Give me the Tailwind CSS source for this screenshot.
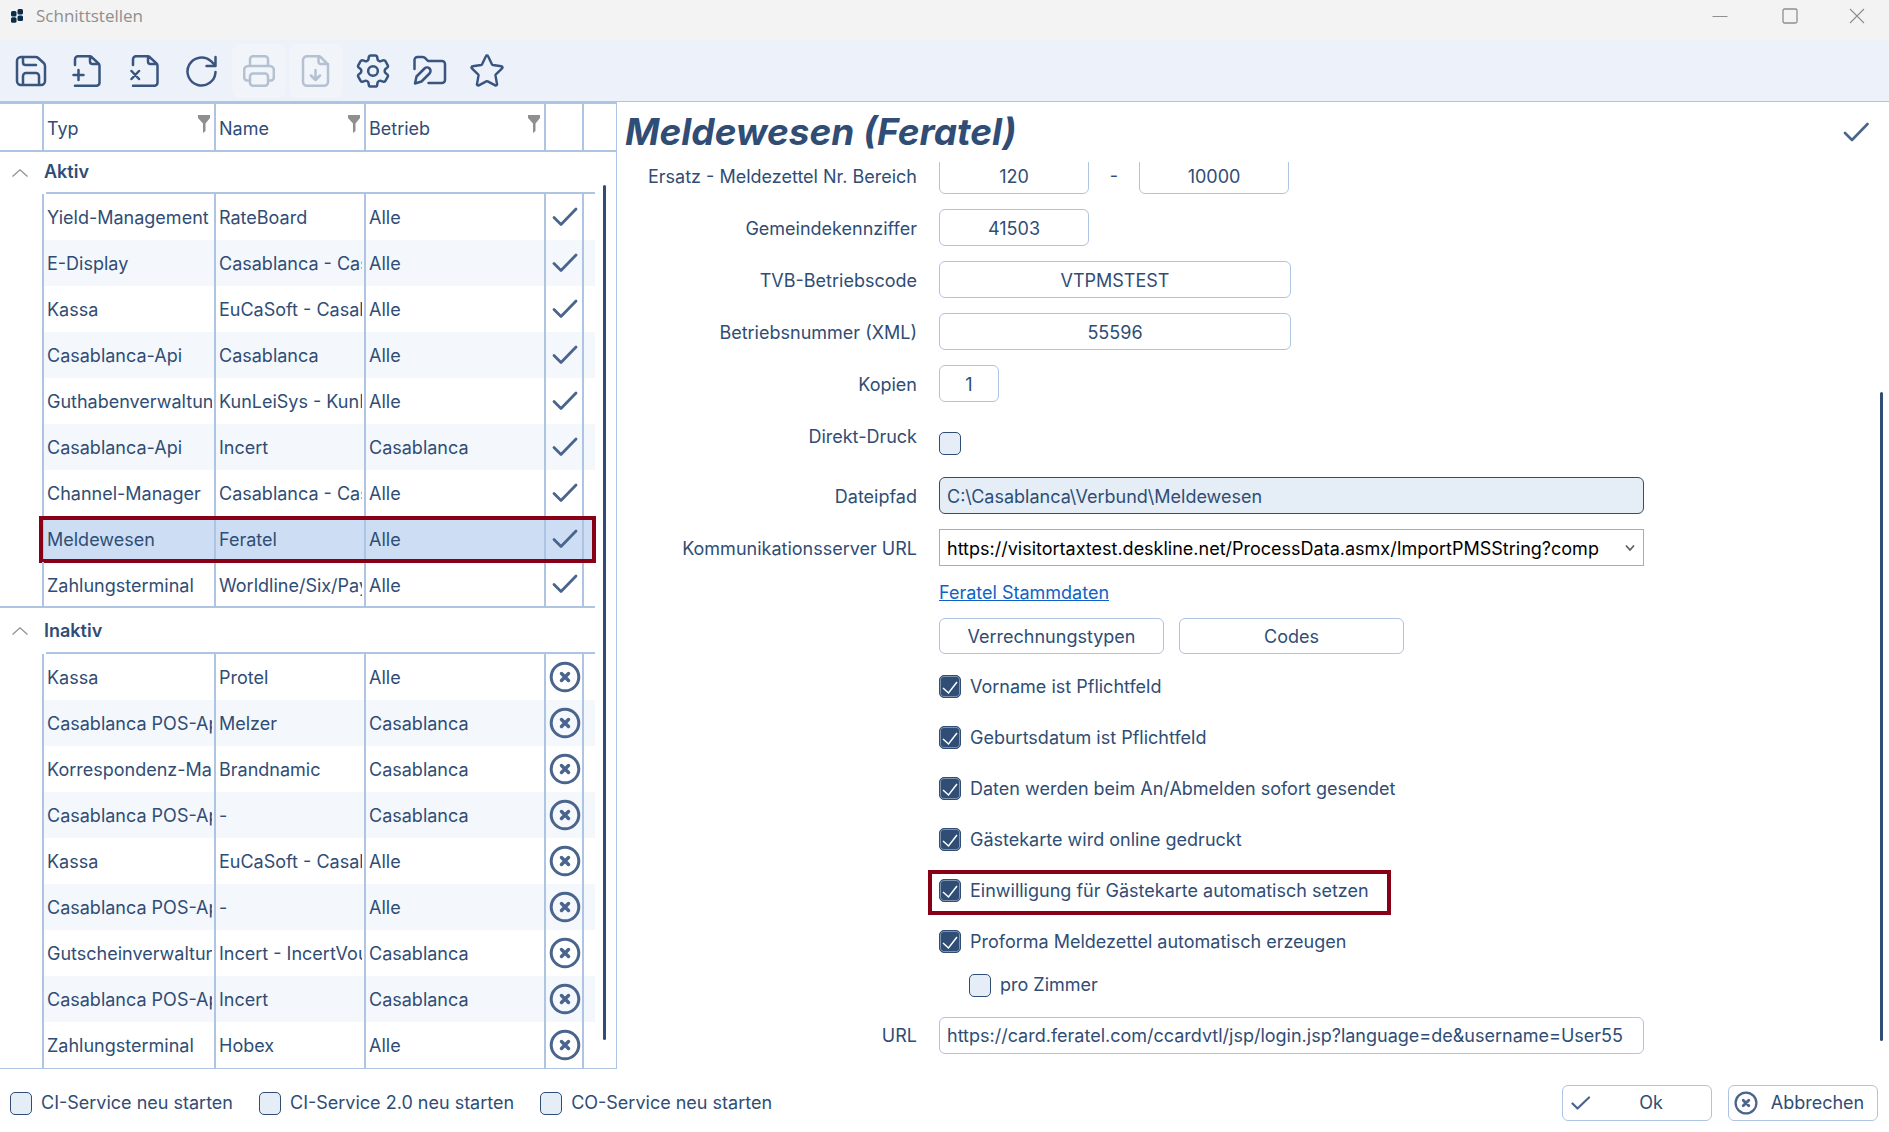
<!DOCTYPE html>
<html lang="de">
<head>
<meta charset="utf-8">
<title>Schnittstellen</title>
<meta name="viewport" content="width=device-width, initial-scale=1">
<script src="https://cdn.jsdelivr.net/npm/@tailwindcss/browser@4"></script>
</head>
<body class="flex min-h-screen flex-col bg-white font-['Inter',sans-serif] text-lg leading-6 text-[#2f4d75]">

<!-- Window title bar -->
<header class="flex h-10 shrink-0 items-start bg-[#f3f3f3] text-[#8f8f8f]">
  <svg class="mt-2 ml-2.5 size-4" viewBox="0 0 16 16" fill="#0b2b4b"><rect x="1" y="3" width="5.500" height="5.500" rx="1.500"/><rect x="7.500" y="1" width="5.500" height="5.500" rx="1.500"/><rect x="1" y="9.300" width="5.500" height="5.500" rx="1.500"/><rect x="7.500" y="7.500" width="5.500" height="5.500" rx="1.500"/></svg>
  <h1 class="mt-1 ml-2.5 flex-1 font-['Open_Sans',sans-serif] text-[17px]">Schnittstellen</h1>
  <button type="button" aria-label="Minimieren" class="flex h-8 w-[70px] items-center justify-center"><svg class="size-4" viewBox="0 0 16 16" stroke="currentColor" fill="none"><path d="M.5 8.500h15"/></svg></button>
  <button type="button" aria-label="Maximieren" class="flex h-8 w-[70px] items-center justify-center"><svg class="size-4" viewBox="0 0 16 16" stroke="currentColor" fill="none" stroke-width="1.300"><rect x="1" y="1" width="14" height="14" rx="1.500"/></svg></button>
  <button type="button" aria-label="Schließen" class="flex h-8 w-16 items-center justify-center"><svg class="size-4" viewBox="0 0 16 16" stroke="currentColor" fill="none" stroke-width="1.200"><path d="M1 1l14 14M15 1L1 15"/></svg></button>
</header>

<!-- Toolbar -->
<nav aria-label="Werkzeuge" class="flex h-[62px] shrink-0 items-start gap-[3px] border-b border-[#adc4e3] bg-[#edf1f9] pt-1 pl-1 text-[#38557f]">
  <button type="button" aria-label="Speichern" class="flex size-[54px] items-center justify-center"><svg class="size-8" viewBox="0 0 32 32" fill="none" stroke="currentColor" stroke-width="2.500" stroke-linecap="round" stroke-linejoin="round"><path d="M2 6a4 4 0 0 1 4-4h14.500a4 4 0 0 1 2.700 1l5.500 5a4 4 0 0 1 1.300 3v15a4 4 0 0 1-4 4H6a4 4 0 0 1-4-4zM8 2v5.500a2.500 2.500 0 0 0 2.500 2.500H21M8 30V21a3 3 0 0 1 3-3h10a3 3 0 0 1 3 3v9"/></svg></button>
  <button type="button" aria-label="Neu" class="flex size-[54px] items-center justify-center"><svg class="size-8" viewBox="0 0 32 32" fill="none" stroke="currentColor" stroke-width="2.500" stroke-linecap="round" stroke-linejoin="round"><path d="M3 10V4.200a3 3 0 0 1 3-3h11.500a3 3 0 0 1 2 .8l7 6.400a3 3 0 0 1 1 2.300V27.800a3 3 0 0 1-3 3H3M18 1.200v5.300A2.500 2.500 0 0 0 20.500 9H27M1.500 20h10M6.500 15v10"/></svg></button>
  <button type="button" aria-label="Löschen" class="flex size-[54px] items-center justify-center"><svg class="size-8" viewBox="0 0 32 32" fill="none" stroke="currentColor" stroke-width="2.500" stroke-linecap="round" stroke-linejoin="round"><path d="M4 10V4.200a3 3 0 0 1 3-3h11.500a3 3 0 0 1 2 .8l7 6.400a3 3 0 0 1 1 2.300V27.800a3 3 0 0 1-3 3H4M19 1.200v5.300A2.500 2.500 0 0 0 21.500 9H28M2.500 16l7.500 8M10 16l-7.500 8"/></svg></button>
  <button type="button" aria-label="Aktualisieren" class="flex size-[54px] items-center justify-center"><svg class="size-8" viewBox="0 0 32 32" fill="none" stroke="currentColor" stroke-width="2.500" stroke-linecap="round" stroke-linejoin="round"><path d="M29.500 17A14 14 0 1 1 25 6.200l4 4M29.500 2v9h-9"/></svg></button>
  <button type="button" disabled aria-label="Drucken" class="flex size-[54px] items-center justify-center rounded-lg bg-[#f1f4f9] text-[#b4c1d2]"><svg class="size-8" viewBox="0 0 32 32" fill="none" stroke="currentColor" stroke-width="2.500" stroke-linejoin="round"><path d="M7 11V4.200a3 3 0 0 1 3-3h12a3 3 0 0 1 3 3V11M7 25.500H4.200a3 3 0 0 1-3-3V15a4 4 0 0 1 4-4h21.600a4 4 0 0 1 4 4v7.500a3 3 0 0 1-3 3H25M10 18.500h12a3 3 0 0 1 3 3v6.300a3 3 0 0 1-3 3H10a3 3 0 0 1-3-3v-6.300a3 3 0 0 1 3-3z"/></svg></button>
  <button type="button" disabled aria-label="Exportieren" class="flex size-[54px] items-center justify-center rounded-lg bg-[#f1f4f9] text-[#b4c1d2]"><svg class="size-8" viewBox="0 0 32 32" fill="none" stroke="currentColor" stroke-width="2.500" stroke-linecap="round" stroke-linejoin="round"><path d="M3 5.200a4 4 0 0 1 4-4h11.500a3 3 0 0 1 2 .8l6.500 6.400a3 3 0 0 1 1 2.300v16.100a4 4 0 0 1-4 4H7a4 4 0 0 1-4-4zM18.500 1.200v5.300A2.500 2.500 0 0 0 21 9h7M15.500 15v10M11 20.500l4.500 4.500 4.500-4.500"/></svg></button>
  <button type="button" aria-label="Einstellungen" class="flex size-[54px] items-center justify-center"><svg class="size-[34px]" viewBox="2.200 2.200 19.600 19.600" fill="none" stroke="currentColor" stroke-width="1.450" stroke-linejoin="round"><path d="M9.594 3.940c.09-.542.56-.94 1.110-.94h2.593c.55 0 1.020.398 1.110.94l.213 1.281c.063.374.313.686.645.87.074.04.147.083.22.127.325.196.72.257 1.075.124l1.217-.456a1.125 1.125 0 0 1 1.370.49l1.296 2.247a1.125 1.125 0 0 1-.26 1.431l-1.003.827c-.293.241-.438.613-.43.992a7.723 7.723 0 0 1 0 .255c-.008.378.137.75.43.991l1.004.827c.424.35.534.955.26 1.430l-1.298 2.247a1.125 1.125 0 0 1-1.369.491l-1.217-.456c-.355-.133-.75-.072-1.076.124a6.470 6.470 0 0 1-.22.128c-.331.183-.581.495-.644.869l-.213 1.281c-.09.543-.56.94-1.110.94h-2.594c-.55 0-1.019-.398-1.110-.94l-.213-1.281c-.062-.374-.312-.686-.644-.87a6.520 6.520 0 0 1-.22-.127c-.325-.196-.72-.257-1.076-.124l-1.217.456a1.125 1.125 0 0 1-1.369-.49l-1.297-2.247a1.125 1.125 0 0 1 .26-1.431l1.004-.827c.292-.24.437-.613.43-.991a6.932 6.932 0 0 1 0-.255c.007-.38-.138-.751-.43-.992l-1.004-.827a1.125 1.125 0 0 1-.26-1.430l1.297-2.247a1.125 1.125 0 0 1 1.370-.491l1.216.456c.356.133.751.072 1.076-.124.072-.044.146-.086.22-.128.332-.183.582-.495.644-.869z"/><circle cx="12" cy="12" r="2.800"/></svg></button>
  <button type="button" aria-label="Ordner bearbeiten" class="flex size-[54px] items-center justify-center"><svg class="h-8 w-[34px]" viewBox="0 0 34 32" fill="none" stroke="currentColor" stroke-width="2.500" stroke-linecap="round" stroke-linejoin="round"><path d="M1.500 14V5a3 3 0 0 1 3-3h5a4 4 0 0 1 3 1.300L15 6h14a3 3 0 0 1 3 3v16a3 3 0 0 1-3 3H15.500M2 28.500l1.500-7L11.500 13.500a3.200 3.200 0 0 1 5 5L8.500 26.500z"/></svg></button>
  <button type="button" aria-label="Favorit" class="flex size-[54px] items-center justify-center"><svg class="size-[34px]" viewBox="0 0 34 34" fill="none" stroke="currentColor" stroke-width="2.400" stroke-linejoin="round"><path d="M15.900 2.200a1.200 1.200 0 0 1 2.200 0l3.800 8a1.500 1.500 0 0 0 1 .8l8.500 1.200a1.200 1.200 0 0 1 .7 2.100l-6.200 6a1.500 1.500 0 0 0-.4 1.200l1.500 8.600a1.200 1.200 0 0 1-1.800 1.300l-7.500-4a1.500 1.500 0 0 0-1.400 0l-7.500 4a1.200 1.200 0 0 1-1.800-1.300l1.500-8.600a1.500 1.500 0 0 0-.4-1.200l-6.200-6a1.200 1.200 0 0 1 .7-2.100l8.500-1.200a1.500 1.500 0 0 0 1-.8z"/></svg></button>
</nav>

<main class="flex flex-1">
  <!-- Interface list -->
  <section aria-label="Liste der Schnittstellen" class="relative w-[617px] shrink-0 self-start border-r border-b border-[#adc4e3]">
    <table class="w-full table-fixed border-separate border-spacing-0 text-left">
      <colgroup><col class="w-[42px]"><col class="w-[172px]"><col class="w-[150px]"><col class="w-[180px]"><col class="w-[38px]"><col class="w-[13px]"><col></colgroup>
      <thead>
        <tr class="h-[50px]" id="head"></tr>
      </thead>
      <tbody id="rows"></tbody>
    </table>
    <div class="pointer-events-none absolute top-[83px] right-2.5 bottom-[28px] w-[3px] rounded-full bg-[#2f4d75]"></div>
  </section>

  <!-- Detail form -->
  <section class="relative min-w-0 flex-1 pt-[60px]">
    <div class="absolute inset-x-0 top-0 flex h-[60px] items-center justify-between pr-5 pl-2">
      <h2 class="text-[37px] font-bold italic">Meldewesen (Feratel)</h2>
      <svg class="h-5 w-[26px]" viewBox="0 0 26 20" fill="none" stroke="#4a658d" stroke-width="2.600" stroke-linecap="round" stroke-linejoin="round"><path d="M2 11l7 7L24.500 2"/></svg>
    </div>
    <div class="overflow-hidden">
      <form id="form" class="-mt-[5px] grid grid-cols-[300px_minmax(0,1fr)] gap-x-[22px] gap-y-[15px]">
        <label for="von" class="flex h-[37px] items-center justify-end pt-0.5">Ersatz - Meldezettel Nr. Bereich</label>
        <div class="flex items-center">
          <input id="von" value="120" class="h-[37px] w-[150px] rounded-md border border-[#adc4e3] px-2 pt-0.5 text-center">
          <span class="w-[50px] text-center">-</span>
          <input aria-label="Bereich bis" value="10000" class="h-[37px] w-[150px] rounded-md border border-[#adc4e3] px-2 pt-0.5 text-center">
        </div>
        <label for="gkz" class="flex h-[37px] items-center justify-end pt-0.5">Gemeindekennziffer</label>
        <input id="gkz" value="41503" class="h-[37px] w-[150px] rounded-md border border-[#adc4e3] px-2 pt-0.5 text-center">
        <label for="tvb" class="flex h-[37px] items-center justify-end pt-0.5">TVB-Betriebscode</label>
        <input id="tvb" value="VTPMSTEST" class="h-[37px] w-[352px] rounded-md border border-[#adc4e3] px-2 pt-0.5 text-center">
        <label for="bnr" class="flex h-[37px] items-center justify-end pt-0.5">Betriebsnummer (XML)</label>
        <input id="bnr" value="55596" class="h-[37px] w-[352px] rounded-md border border-[#adc4e3] px-2 pt-0.5 text-center">
        <label for="kop" class="flex h-[37px] items-center justify-end pt-0.5">Kopien</label>
        <input id="kop" value="1" class="h-[37px] w-[60px] rounded-md border border-[#adc4e3] px-2 pt-0.5 text-center">
        <label for="dd" class="flex h-[37px] items-center justify-end pt-0.5">Direkt-Druck</label>
        <div class="flex h-[45px] items-end pb-[7px]"><input id="dd" type="checkbox" class="h-[23px] w-[22px] appearance-none rounded-[5px] border border-[#2f4d75] bg-[#e5edf7]"></div>
        <label for="pfad" class="flex h-[37px] items-center justify-end pt-0.5">Dateipfad</label>
        <input id="pfad" readonly value="C:\Casablanca\Verbund\Meldewesen" class="h-[37px] w-full max-w-[705px] rounded-md border border-[#2f4d75] bg-[#e5edf7] px-[7px] pt-0.5">
        <label for="kurl" class="flex h-[37px] items-center justify-end pt-0.5">Kommunikationsserver URL</label>
        <div class="relative w-full max-w-[705px] border border-[#acacac] pr-[29px]">
          <select id="kurl" class="block h-[35px] w-full appearance-none pt-0.5 pl-[7px] text-black"><option>https://visitortaxtest.deskline.net/ProcessData.asmx/ImportPMSString?comp</option></select>
          <svg class="pointer-events-none absolute top-3.5 right-2 h-2 w-2.5" viewBox="0 0 10 8" fill="none" stroke="#606060" stroke-width="1.800"><path d="M1 1.500l4 4.500 4-4.500"/></svg>
        </div>
        <div class="col-start-2 flex h-[22px] items-center pt-0.5"><a href="#stammdaten" class="text-[#0f62c4] underline">Feratel Stammdaten</a></div>
        <div class="col-start-2 flex gap-[15px]">
          <button type="button" class="h-9 w-[225px] rounded-md border border-[#adc4e3] pt-0.5">Verrechnungstypen</button>
          <button type="button" class="h-9 w-[225px] rounded-md border border-[#adc4e3] pt-0.5">Codes</button>
        </div>
        <div id="options" class="col-start-2 -mt-2 -mb-px"></div>
        <label for="url" class="flex h-[37px] items-center justify-end">URL</label>
        <input id="url" value="https://card.feratel.com/ccardvtl/jsp/login.jsp?language=de&amp;username=User55" class="h-[37px] w-full max-w-[705px] rounded-md border border-[#adc4e3] pr-0.5 pl-[7px]">
      </form>
    </div>
    <div class="pointer-events-none absolute top-[290px] right-1.5 bottom-[28px] w-[3px] rounded-full bg-[#2f4d75]"></div>
  </section>
</main>

<!-- Footer actions -->
<footer class="flex h-[63px] shrink-0 items-center pt-1.5 pr-[11px] pb-px pl-2.5">
  <div id="services" class="flex gap-[26px]"></div>
  <div class="ml-auto flex gap-4">
    <button type="button" class="flex h-9 w-[150px] items-center rounded-md border border-[#adc4e3] pr-4 pl-2"><svg class="h-3.5 w-5" viewBox="0 0 20 14" fill="none" stroke="#4a658d" stroke-width="2.200" stroke-linecap="round" stroke-linejoin="round"><path d="M1.500 7.500L6.500 12.500 18 1.500"/></svg><span class="flex-1 pl-4 text-center">Ok</span></button>
    <button type="button" class="flex h-9 w-[150px] items-center rounded-md border border-[#adc4e3] pl-[5px]"><svg class="size-6" viewBox="0 0 30 30" fill="none" stroke="#4a658d" stroke-width="2.800" stroke-linecap="round"><circle cx="15" cy="15" r="13"/><path stroke-width="3.500" d="M11.500 11.500l7 7M18.500 11.500l-7 7"/></svg><span class="flex-1 text-center">Abbrechen</span></button>
  </div>
</footer>

<script>
const checkIcon = '<svg class="h-5 w-[26px]" viewBox="0 0 26 20" fill="none" stroke="#4a658d" stroke-width="2.800" stroke-linecap="round" stroke-linejoin="round"><path d="M2 10.500l7 7L24 2"/></svg>';
const crossIcon = '<svg class="size-8" viewBox="0 0 32 32" fill="none" stroke="#4a658d" stroke-width="3" stroke-linecap="round"><circle cx="16" cy="16" r="13.800"/><path stroke-width="3.500" d="M12.500 12.500l7 7M19.500 12.500l-7 7"/></svg>';
const filterIcon = '<svg class="mb-2.5 h-[18px] w-3" viewBox="0 0 12 18" fill="#8f8f8f"><path d="M0 0h12v3L7.500 8.500V16L5 18V8.500L0 3z"/></svg>';

// Column headings
document.getElementById('head').innerHTML =
  '<th class="border-t-2 border-b-2 border-[#adc4e3]"></th>' +
  ['Typ', 'Name', 'Betrieb'].map(t => `<th class="border-t-2 border-b-2 border-l-2 border-[#adc4e3] pt-1 pr-1 pl-[3px] font-normal"><div class="flex items-center justify-between">${t}${filterIcon}</div></th>`).join('') +
  '<th class="border-t-2 border-b-2 border-l-2 border-[#adc4e3]"></th><th colspan="2" class="border-t-2 border-b-2 border-l-2 border-[#adc4e3]"></th>';

const active = [
  ['Yield-Management', 'RateBoard', 'Alle'], ['E-Display', 'Casablanca - Casablanca', 'Alle'], ['Kassa', 'EuCaSoft - Casablanca', 'Alle'],
  ['Casablanca-Api', 'Casablanca', 'Alle'], ['Guthabenverwaltung', 'KunLeiSys - KunLeiSys', 'Alle'], ['Casablanca-Api', 'Incert', 'Casablanca'],
  ['Channel-Manager', 'Casablanca - Casablanca', 'Alle'], ['Meldewesen', 'Feratel', 'Alle'], ['Zahlungsterminal', 'Worldline/Six/Payment', 'Alle']];
const inactive = [
  ['Kassa', 'Protel', 'Alle'], ['Casablanca POS-Api', 'Melzer', 'Casablanca'], ['Korrespondenz-Manager', 'Brandnamic', 'Casablanca'],
  ['Casablanca POS-Api', '-', 'Casablanca'], ['Kassa', 'EuCaSoft - Casablanca', 'Alle'], ['Casablanca POS-Api', '-', 'Alle'],
  ['Gutscheinverwaltung', 'Incert - IncertVoucher', 'Casablanca'], ['Casablanca POS-Api', 'Incert', 'Casablanca'], ['Zahlungsterminal', 'Hobex', 'Alle']];

const group = (name, height, pad) => `<tr class="${height}"><td class="p-0"><svg class="ml-3 h-2 w-4" viewBox="0 0 16 8" fill="none" stroke="#8f8f8f" stroke-width="1.200"><path d="M.5 7.500L8 .8l7.500 6.700"/></svg></td><th colspan="5" scope="rowgroup" class="p-0"><div class="flex ${height} flex-col"><div class="flex flex-1 items-center pl-0.5 font-semibold ${pad}">${name}</div><div class="ml-1 h-0.5 bg-[#adc4e3]"></div></div></th><td></td></tr>`;
const row = (r, i, icon, line) => {
  const selected = r[0] === 'Meldewesen';
  const bg = selected ? 'bg-[#cddef4]' : i % 2 ? 'bg-[#f4f7fc]' : '';
  const pad = line ? 'pt-1' : 'pt-0.5';
  const frame = selected ? '<div class="pointer-events-none absolute top-0 -bottom-px -left-[5px] w-[557px] border-4 border-[#880015]"></div>' : '';
  return `<tr class="h-[46px]"><td class="p-0 ${line}"></td>` +
    r.map((t, n) => `<td class="border-l-2 border-[#adc4e3] pr-0.5 pb-0 pl-[3px] ${pad} ${line} ${bg} ${n ? '' : 'relative'}"><div class="overflow-hidden whitespace-nowrap">${t}</div>${n ? '' : frame}</td>`).join('') +
    `<td class="border-l-2 border-[#adc4e3] p-0 ${line} ${bg}"><div class="flex w-[38px] justify-center">${icon}</div></td><td class="border-l-2 border-[#adc4e3] p-0 ${line} ${bg}"></td><td></td></tr>`;
};
document.getElementById('rows').innerHTML =
  group('Aktiv', 'h-[42px]', '') + active.map((r, i) => row(r, i, checkIcon, i === 8 ? 'border-b-2 border-b-[#adc4e3]' : '')).join('') +
  group('Inaktiv', 'h-[46px]', 'pt-0.5') + inactive.map((r, i) => row(r, i, crossIcon, '')).join('');

// Tick boxes with their labels
const box = (id, text, checked) => `<span class="relative flex h-[23px] w-[22px]"><input id="${id}" type="checkbox" ${checked ? 'checked' : ''} class="peer h-[23px] w-[22px] appearance-none rounded-[5px] border border-[#2f4d75] bg-[#e5edf7] checked:bg-[#2f4d75] checked:inset-ring checked:inset-ring-[#7f93ae]"><svg class="pointer-events-none absolute inset-0 hidden h-[23px] w-[22px] peer-checked:block" viewBox="0 0 22 23" fill="none" stroke="#fff" stroke-width="1.500"><path d="M4 13l5.500 5L18 7"/></svg></span><label for="${id}" class="whitespace-nowrap">${text}</label>`;
const options = ['Vorname ist Pflichtfeld', 'Geburtsdatum ist Pflichtfeld', 'Daten werden beim An/Abmelden sofort gesendet', 'Gästekarte wird online gedruckt', 'Einwilligung für Gästekarte automatisch setzen', 'Proforma Meldezettel automatisch erzeugen'];
document.getElementById('options').innerHTML = options.map((t, i) =>
  `<div class="relative flex h-[51px] items-center gap-[9px]">${box('opt' + i, t, true)}${i === 4 ? '<div class="pointer-events-none absolute top-[5px] bottom-px -left-[11px] w-[463px] border-4 border-[#880015]"></div>' : ''}</div>`).join('') +
  `<div class="flex h-9 items-center gap-[9px] pl-[30px]">${box('zimmer', 'pro Zimmer', false)}</div>`;
document.getElementById('services').innerHTML = ['CI-Service neu starten', 'CI-Service 2.0 neu starten', 'CO-Service neu starten'].map((t, i) =>
  `<div class="flex items-center gap-[9px]">${box('svc' + i, t, false)}</div>`).join('');
</script>
</body>
</html>
